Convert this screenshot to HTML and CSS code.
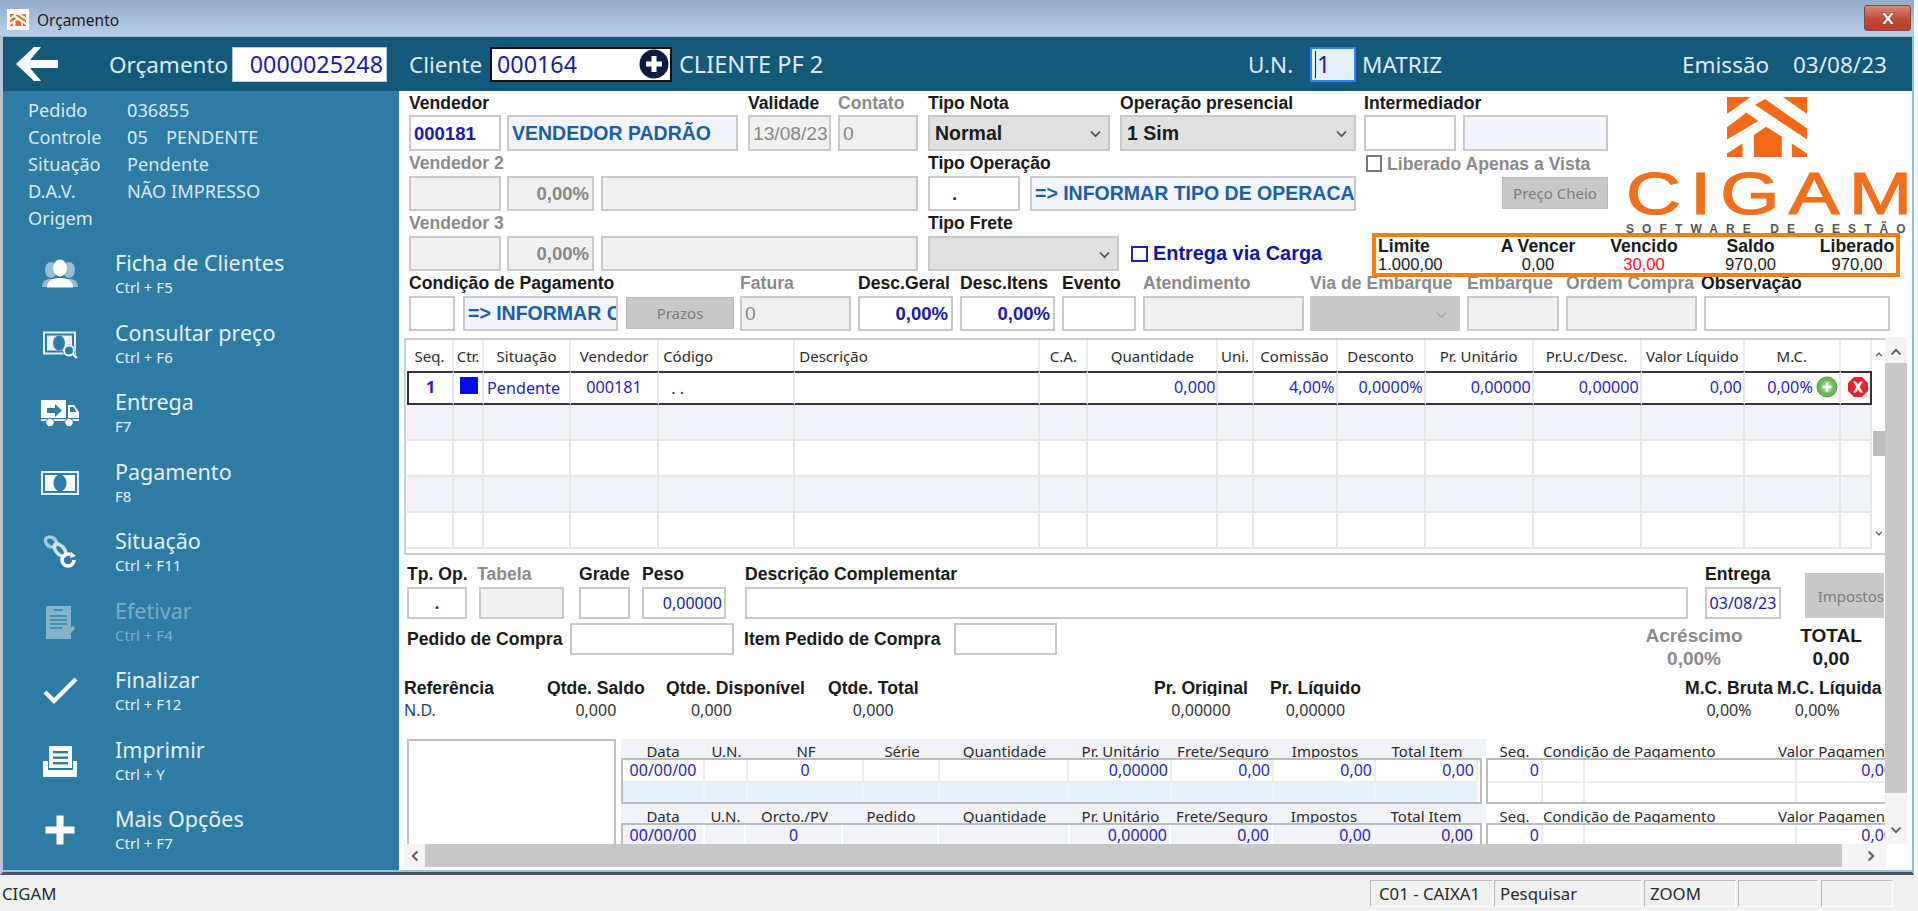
FILE: index.html
```html
<!DOCTYPE html>
<html lang="pt-BR">
<head>
<meta charset="utf-8">
<title>Orçamento</title>
<link rel="stylesheet" href="styles.css">
</head>
<body>
<svg class="sprite" xmlns="http://www.w3.org/2000/svg">
  <symbol id="chev" viewBox="0 0 12 8"><polyline points="1.5,1.5 6,6.2 10.5,1.5" fill="none" stroke="currentColor" stroke-width="1.8"/></symbol>
  <symbol id="house" viewBox="322 22 238 178">
    <polygon points="322,22 392,22 322,72"/>
    <polygon points="488,22 560,22 560,72"/>
    <polygon points="435,28 560,115 560,148 405,45"/>
    <polygon points="380,68 415,93 322,148 322,112"/>
    <polygon points="438,110 485,140 485,200 402,200 402,135"/>
    <polygon points="368,160 368,200 322,200 322,190"/>
    <polygon points="515,160 560,190 560,200 515,200"/>
  </symbol>
</svg>
<div class="win">
  <div class="title">
    <span class="t-ico"><svg class="t-house" aria-hidden="true"><use href="#house"/></svg></span>
    <span class="t-text">Orçamento</span>
    <span class="close"><svg viewBox="0 0 16 14" class="close-x"><path d="M2 1.5 L5.5 1.5 L8 5 L10.5 1.5 L14 1.5 L10 7 L14 12.5 L10.5 12.5 L8 9 L5.5 12.5 L2 12.5 L6 7 Z" fill="#fff" stroke="#6b2a22" stroke-width=".7"/></svg></span>
  </div>
  <div class="hdr">
    <span class="back"><svg viewBox="0 0 42 34" class="back-ico"><path d="M18 0 L25 0 L14 13 L42 13 L42 21 L14 21 L25 34 L18 34 L0 17 Z" fill="#fff"/></svg></span>
    <span class="hl hw-orc">Orçamento</span>
    <span class="hbox hb-orc">0000025248</span>
    <span class="hl hw-cli">Cliente</span>
    <span class="hbox hb-cli">000164<svg viewBox="0 0 30 30" class="plus"><circle cx="15" cy="15" r="14.5" fill="#101a40"/><rect x="7" y="12.5" width="16" height="5" fill="#fff"/><rect x="12.5" y="7" width="5" height="16" fill="#fff"/></svg></span>
    <span class="hl hw-name">CLIENTE PF 2</span>
    <span class="hl hw-un">U.N.</span>
    <span class="hbox hb-un"><i class="caret"></i>1</span>
    <span class="hl hw-mat">MATRIZ</span>
    <span class="hl hw-emi">Emissão</span>
    <span class="hl">03/08/23</span>
  </div>
  <div class="content">
    <aside class="side">
      <div class="info">
        <div class="irow"><span class="ik">Pedido</span><span>036855</span></div>
        <div class="irow"><span class="ik">Controle</span><span class="ctl">05</span><span>PENDENTE</span></div>
        <div class="irow"><span class="ik">Situação</span><span>Pendente</span></div>
        <div class="irow"><span class="ik">D.A.V.</span><span>NÃO IMPRESSO</span></div>
        <div class="irow"><span class="ik">Origem</span></div>
      </div>
      <div class="mi">
        <svg class="mic" viewBox="0 0 40 40"><g fill="#fff" opacity=".5"><ellipse cx="11" cy="16" rx="6" ry="8"/><path d="M2 33 C2 27 6 25 11 25 S20 27 20 33Z"/><ellipse cx="29" cy="16" rx="6" ry="8"/><path d="M20 33 C20 27 24 25 29 25 S38 27 38 33Z"/></g><g fill="#fff"><ellipse cx="20" cy="14" rx="7" ry="8.5"/><path d="M7 33.5 C7 26 13 24 20 24 S33 26 33 33.5Z"/></g></svg>
        <div><div class="mt">Ficha de Clientes</div><div class="ms">Ctrl + F5</div></div>
      </div>
      <div class="mi">
        <svg class="mic" viewBox="0 0 40 40"><rect x="4" y="8.5" width="31" height="21" fill="none" stroke="#e8f0f5" stroke-width="2"/><rect x="7" y="11.5" width="25" height="15" fill="#e8f0f5"/><ellipse cx="19" cy="19" rx="6" ry="7.5" fill="#2e7ba3"/><circle cx="29" cy="27" r="6.5" fill="#2e7ba3"/><circle cx="29" cy="26.5" r="5" fill="none" stroke="#fff" stroke-width="1.8"/><line x1="32.5" y1="30" x2="37" y2="34" stroke="#fff" stroke-width="2.2"/></svg>
        <div><div class="mt">Consultar preço</div><div class="ms">Ctrl + F6</div></div>
      </div>
      <div class="mi">
        <svg class="mic" viewBox="0 0 40 40"><path d="M1 7 H26 V28 H1Z" fill="#fff"/><path d="M28 12 H34 L39 19 V28 H28Z" fill="#fff"/><path d="M30 14 H33.5 L36.5 19 H30Z" fill="#2e7ba3"/><path d="M7 15 H15 V11 L22 17.5 L15 24 V20 H7Z" fill="#2e7ba3"/><rect x="1" y="25" width="38" height="1.2" fill="#2e7ba3"/><circle cx="10" cy="29.5" r="4.2" fill="#fff" stroke="#2e7ba3"/><circle cx="29" cy="29.5" r="4.2" fill="#fff" stroke="#2e7ba3"/></svg>
        <div><div class="mt">Entrega</div><div class="ms">F7</div></div>
      </div>
      <div class="mi">
        <svg class="mic" viewBox="0 0 40 40"><rect x="2" y="9" width="36" height="22" fill="none" stroke="#e8f0f5" stroke-width="2"/><rect x="5" y="12" width="30" height="16" fill="#fff"/><ellipse cx="20" cy="20" rx="6.5" ry="8.5" fill="#2e7ba3"/></svg>
        <div><div class="mt">Pagamento</div><div class="ms">F8</div></div>
      </div>
      <div class="mi">
        <svg class="mic" viewBox="0 0 40 40"><g fill="none" stroke-width="3.6"><ellipse cx="11" cy="10" rx="6" ry="4.5" transform="rotate(35 11 10)" stroke="#a3cbdd"/><ellipse cx="20" cy="18" rx="7.5" ry="4" transform="rotate(48 20 18)" stroke="#cfe2ec"/><circle cx="28" cy="28" r="6" stroke="#fff" stroke-dasharray="30 7.7"/></g><path d="M31 20 L36 24 L30 26Z" fill="#fff"/></svg>
        <div><div class="mt">Situação</div><div class="ms">Ctrl + F11</div></div>
      </div>
      <div class="mi off">
        <svg class="mic" viewBox="0 0 40 40"><rect x="6" y="4" width="25" height="33" fill="#fff"/><g stroke="#2e7ba3" stroke-width="1.4"><line x1="14" y1="8" x2="23" y2="8"/><line x1="10" y1="14" x2="27" y2="14"/><line x1="10" y1="18" x2="27" y2="18"/><line x1="10" y1="22" x2="27" y2="22"/><line x1="10" y1="26" x2="22" y2="26"/></g><polyline points="21,29 26,34 34,25" fill="none" stroke="#fff" stroke-width="3.5"/></svg>
        <div><div class="mt">Efetivar</div><div class="ms">Ctrl + F4</div></div>
      </div>
      <div class="mi">
        <svg class="mic" viewBox="0 0 40 40"><polyline points="5,21 14,30 36,8" fill="none" stroke="#fff" stroke-width="4.2"/></svg>
        <div><div class="mt">Finalizar</div><div class="ms">Ctrl + F12</div></div>
      </div>
      <div class="mi">
        <svg class="mic" viewBox="0 0 40 40"><path d="M9 5 H32 V27 H9Z" fill="#fff"/><g fill="#2e7ba3"><rect x="13" y="10" width="15" height="2.4"/><rect x="13" y="15.5" width="15" height="2.4"/><rect x="13" y="21" width="15" height="2.4"/></g><path d="M3 20 H8 V29 H33 V20 H37 V36 H3Z" fill="#fff"/></svg>
        <div><div class="mt">Imprimir</div><div class="ms">Ctrl + Y</div></div>
      </div>
      <div class="mi">
        <svg class="mic" viewBox="0 0 40 40"><path d="M16.5 5.5 H23.5 V16.5 H34.5 V23.5 H23.5 V34.5 H16.5 V23.5 H5.5 V16.5 H16.5Z" fill="#fff"/></svg>
        <div><div class="mt">Mais Opções</div><div class="ms">Ctrl + F7</div></div>
      </div>
    </aside>
    <main class="main">
      <section class="top">
        <div class="fr first">
          <div class="f w92 g6"><div class="lb">Vendedor</div><div class="in blu b">000181</div></div>
          <div class="f w231 g10"><div class="lb">&nbsp;</div><div class="in tint big">VENDEDOR PADRÃO</div></div>
          <div class="f w83 g7"><div class="lb">Validade</div><div class="in dis reg">13/08/23</div></div>
          <div class="f w80 g10"><div class="lb mute">Contato</div><div class="in dis reg">0</div></div>
          <div class="f w182 g10"><div class="lb">Tipo Nota</div><div class="in sel b">Normal<svg class="chev"><use href="#chev"/></svg></div></div>
          <div class="f w236 g8"><div class="lb">Operação presencial</div><div class="in sel b">1 Sim<svg class="chev"><use href="#chev"/></svg></div></div>
          <div class="f w92 g7"><div class="lb">Intermediador</div><div class="in"></div></div>
          <div class="f w145"><div class="lb">&nbsp;</div><div class="in tint"></div></div>
        </div>
        <div class="fr">
          <div class="f w92 g6"><div class="lb mute">Vendedor 2</div><div class="in dis"></div></div>
          <div class="f w87 g7"><div class="lb">&nbsp;</div><div class="in dis num b">0,00%</div></div>
          <div class="f w317 g10"><div class="lb">&nbsp;</div><div class="in dis"></div></div>
          <div class="f w92 g10"><div class="lb">Tipo Operação</div><div class="in blu ctr b dot-op">.</div></div>
          <div class="f w326 g8"><div class="lb">&nbsp;</div><div class="in tint mid">=&gt; INFORMAR TIPO DE OPERACAO</div></div>
          <div class="f w244">
            <div class="lb mute chk"><i class="box"></i>Liberado Apenas a Vista</div>
            <div class="btn btn-preco">Preço Cheio</div>
          </div>
        </div>
        <div class="fr">
          <div class="f w92 g6"><div class="lb mute">Vendedor 3</div><div class="in dis"></div></div>
          <div class="f w87 g7"><div class="lb">&nbsp;</div><div class="in dis num b">0,00%</div></div>
          <div class="f w317 g10"><div class="lb">&nbsp;</div><div class="in dis"></div></div>
          <div class="f w191 g12"><div class="lb">Tipo Frete</div><div class="in sel"><svg class="chev"><use href="#chev"/></svg></div></div>
          <div class="carga"><i class="box box-blue"></i>Entrega via Carga</div>
        </div>
        <div class="fr">
          <div class="f w46 g8"><div class="lb">Condição de Pagamento</div><div class="in"></div></div>
          <div class="f w155 g8"><div class="lb">&nbsp;</div><div class="in tint mid">=&gt; INFORMAR CONDIÇÃO</div></div>
          <div class="f w108 g6"><div class="lb">&nbsp;</div><div class="btn btn-prazos">Prazos</div></div>
          <div class="f w111 g7"><div class="lb mute">Fatura</div><div class="in dis reg">0</div></div>
          <div class="f w95 g7"><div class="lb">Desc.Geral</div><div class="in blu num b">0,00%</div></div>
          <div class="f w95 g7"><div class="lb">Desc.Itens</div><div class="in blu num b">0,00%</div></div>
          <div class="f w74 g7"><div class="lb">Evento</div><div class="in"></div></div>
          <div class="f w161 g6"><div class="lb mute">Atendimento</div><div class="in dis"></div></div>
          <div class="f w150 g7"><div class="lb mute">Via de Embarque</div><div class="in sel sel-dark"><svg class="chev chev-l"><use href="#chev"/></svg></div></div>
          <div class="f w92 g7"><div class="lb mute">Embarque</div><div class="in dis"></div></div>
          <div class="f w131 g7"><div class="lb mute">Ordem Compra</div><div class="in dis"></div></div>
          <div class="f w186"><div class="lb lb-obs">Observação</div><div class="in"></div></div>
        </div>
        <div class="logo">
          <svg class="logo-house" aria-hidden="true"><use href="#house"/></svg>
          <div class="logo-word">CIGAM</div>
          <div class="logo-sub">SOFTWARE DE GESTÃO</div>
        </div>
        <div class="credit">
          <div class="cc cc-first"><b>Limite</b><span>1.000,00</span></div>
          <div class="cc"><b>A Vencer</b><span>0,00</span></div>
          <div class="cc"><b>Vencido</b><span class="red">30,00</span></div>
          <div class="cc"><b>Saldo</b><span>970,00</span></div>
          <div class="cc"><b>Liberado</b><span>970,00</span></div>
        </div>
      </section>
      <div class="mid-area">
        <div class="lc">
          <div class="gridwrap">
            <table class="items">
              <colgroup><col class="c47"><col class="c30"><col class="c87"><col class="c88"><col class="c136"><col class="c245"><col class="c48"><col class="c130"><col class="c35"><col class="c84"><col class="c88"><col class="c108"><col class="c108"><col class="c103"><col class="c96"><col class="c31"></colgroup>
              <thead><tr><th>Seq.</th><th>Ctr.</th><th>Situação</th><th>Vendedor</th><th class="tl">Código</th><th class="tl">Descrição</th><th>C.A.</th><th>Quantidade</th><th>Uni.</th><th>Comissão</th><th>Desconto</th><th>Pr. Unitário</th><th>Pr.U.c/Desc.</th><th>Valor Líquido</th><th>M.C.</th><th></th></tr></thead>
              <tbody>
                <tr class="sel-row"><td class="ctr b">1</td><td><i class="sq"></i></td><td class="tl pl3 low">Pendente</td><td class="ctr">000181</td><td class="tl pl12 low">. .</td><td></td><td></td><td class="tr">0,000</td><td></td><td class="tr">4,00%</td><td class="tr">0,0000%</td><td class="tr">0,00000</td><td class="tr">0,00000</td><td class="tr">0,00</td>
                  <td class="tr"><span class="mc">0,00%<svg viewBox="0 0 22 22" class="ico22"><circle cx="11" cy="11" r="10" fill="#6fb560" stroke="#4f9a48"/><circle cx="11" cy="11" r="6" fill="#8ccb7c"/><path d="M9.5 6.5h3v3h3v3h-3v3h-3v-3h-3v-3h3z" fill="#fff"/></svg></span></td>
                  <td><svg viewBox="0 0 22 22" class="ico22 ico-x"><polygon points="7,1 15,1 21,7 21,15 15,21 7,21 1,15 1,7" fill="#e8212b"/><path d="M6 5.5h3l2 3 2-3h3l-3.4 5.5 3.4 5.5h-3l-2-3-2 3h-3l3.4-5.5z" fill="#fff"/></svg></td></tr>
                <tr class="alt"><td></td><td></td><td></td><td></td><td></td><td></td><td></td><td></td><td></td><td></td><td></td><td></td><td></td><td></td><td></td><td></td></tr>
                <tr><td></td><td></td><td></td><td></td><td></td><td></td><td></td><td></td><td></td><td></td><td></td><td></td><td></td><td></td><td></td><td></td></tr>
                <tr class="alt"><td></td><td></td><td></td><td></td><td></td><td></td><td></td><td></td><td></td><td></td><td></td><td></td><td></td><td></td><td></td><td></td></tr>
                <tr><td></td><td></td><td></td><td></td><td></td><td></td><td></td><td></td><td></td><td></td><td></td><td></td><td></td><td></td><td></td><td></td></tr>
              </tbody>
            </table>
            <div class="vs-in">
              <svg class="chev-in up"><use href="#chev"/></svg>
              <div class="thumb"></div>
              <svg class="chev-in"><use href="#chev"/></svg>
            </div>
          </div>
          <div class="brow-a">
            <div class="f w60 g12"><div class="lb">Tp. Op.</div><div class="in2 blu ctr b dot-tp">.</div></div>
            <div class="f w85 g15"><div class="lb mute lb-tab">Tabela</div><div class="in2 dis"></div></div>
            <div class="f w51 g12"><div class="lb">Grade</div><div class="in2"></div></div>
            <div class="f w84 g19"><div class="lb">Peso</div><div class="in2 blu num">0,00000</div></div>
            <div class="f w943 g17"><div class="lb">Descrição Complementar</div><div class="in2"></div></div>
            <div class="f w76 g24"><div class="lb">Entrega</div><div class="in2 blu ctr">03/08/23</div></div>
            <div class="btn btn-imp">Impostos</div>
          </div>
          <div class="brow-b">
            <div class="lb lb-ped">Pedido de Compra</div>
            <div class="in2 w164"></div>
            <div class="lb lb-item">Item Pedido de Compra</div>
            <div class="in2 w103"></div>
            <div class="tot tot-a"><b>Acréscimo</b><b>0,00%</b></div>
            <div class="tot tot-t"><b>TOTAL</b><b>0,00</b></div>
          </div>
          <div class="brow-c">
            <div class="st st-l"><b>Referência</b><span>N.D.</span></div>
            <div class="st"><b>Qtde. Saldo</b><span>0,000</span></div>
            <div class="st"><b>Qtde. Disponível</b><span class="off48">0,000</span></div>
            <div class="st"><b>Qtde. Total</b><span>0,000</span></div>
            <div class="st"><b>Pr. Original</b><span>0,00000</span></div>
            <div class="st"><b>Pr. Líquido</b><span>0,00000</span></div>
            <div class="st"><b>M.C. Bruta</b><span>0,00%</span></div>
            <div class="st"><b>M.C. Líquida</b><span class="off24">0,00%</span></div>
          </div>
          <div class="brow-d">
            <div class="imgbox"></div>
            <div class="minis">
              <div class="mhead">
                <div class="mgrid g-a"><span>Data</span><span>U.N.</span><span>NF</span><span>Série</span><span>Quantidade</span><span>Pr. Unitário</span><span>Frete/Seguro</span><span>Impostos</span><span>Total Item</span></div>
                <div class="mgrid g-r"><span>Seq.</span><span class="tl">Condição de Pagamento</span><span class="tl">Valor Pagamento</span></div>
              </div>
              <div class="mbody">
                <div class="mtab">
                  <div class="mrow g-a"><span>00/00/00</span><span></span><span>0</span><span></span><span></span><span class="tr">0,00000</span><span class="tr">0,00</span><span class="tr">0,00</span><span class="tr">0,00</span></div>
                  <div class="mrow g-a blue"><span></span><span></span><span></span><span></span><span></span><span></span><span></span><span></span><span></span></div>
                </div>
                <div class="mtab mtab-r">
                  <div class="mrow g-v"><span class="tr">0</span><span></span><span></span><span class="tr">0,00</span></div>
                  <div class="mrow g-v"><span></span><span></span><span></span><span></span></div>
                </div>
              </div>
              <div class="mhead mhead2">
                <div class="mgrid g-b"><span>Data</span><span>U.N.</span><span>Orcto./PV</span><span>Pedido</span><span>Quantidade</span><span>Pr. Unitário</span><span>Frete/Seguro</span><span>Impostos</span><span>Total Item</span></div>
                <div class="mgrid g-r"><span>Seq.</span><span class="tl">Condição de Pagamento</span><span class="tl">Valor Pagamento</span></div>
              </div>
              <div class="mbody">
                <div class="mtab">
                  <div class="mrow g-b tint2"><span>00/00/00</span><span></span><span>0</span><span></span><span></span><span class="tr">0,00000</span><span class="tr">0,00</span><span class="tr">0,00</span><span class="tr">0,00</span></div>
                </div>
                <div class="mtab mtab-r">
                  <div class="mrow g-v"><span class="tr">0</span><span></span><span></span><span class="tr">0,00</span></div>
                </div>
              </div>
            </div>
          </div>
        </div>
        <div class="vs-out">
          <svg class="chev-out up"><use href="#chev"/></svg>
          <div class="vs-track"></div>
          <svg class="chev-out"><use href="#chev"/></svg>
        </div>
      </div>
      <div class="hs">
        <span class="hs-l"><svg class="chev-h left"><use href="#chev"/></svg></span>
        <div class="hs-track"></div>
        <span class="hs-r"><svg class="chev-h right"><use href="#chev"/></svg></span>
      </div>
    </main>
  </div>
</div>
<footer class="status">
  <span class="st-name">CIGAM</span>
  <span class="pn pn1">C01 - CAIXA1</span>
  <span class="pn pn2">Pesquisar</span>
  <span class="pn pn3">ZOOM</span>
  <span class="pn pn4"></span>
  <span class="pn pn5"></span>
</footer>
</body>
</html>
```

FILE: styles.css
```css
* { box-sizing: border-box; }
html, body { margin: 0; padding: 0; height: 911px; overflow: hidden; background: #fff; }
body { font-family: "Noto Sans", sans-serif; color: #222; font-size: 15px; }
i { font-style: normal; display: inline-block; }
.sprite { display: none; }

.win { width: 1914px; height: 875px; border-left: 3px solid #b4c6d6; border-right: 2px solid #8cc4e4; border-bottom: 3px solid #4a5560; position: relative; }
.title { height: 37px; margin-left: -3px; margin-right: -2px; padding-top: 3px; background: linear-gradient(#93abc9, #b8d1ea); display: flex; align-items: center; border-bottom: 1px solid #9ab3c8; }
.t-ico { width: 22px; height: 21px; margin-left: 7px; background: #fff; display: flex; align-items: center; justify-content: center; }
.t-house { width: 16px; height: 16px; fill: #f0641c; }
.t-text { margin-left: 8px; font-size: 15.5px; color: #1c1c1c; }
.close { margin-left: auto; margin-right: 3px; width: 47px; height: 26px; margin-top: -3px; border: 1px solid #7a4a44; border-radius: 3px; background: linear-gradient(#d88a7c, #c0493a 55%, #b83c2e); display: flex; align-items: center; justify-content: center; }
.close-x { width: 18px; height: 15px; }

.hdr { height: 54px; background: #14587a; color: #dfeaf1; display: flex; align-items: center; font-size: 22.5px; white-space: nowrap; }
.back { width: 106px; padding-left: 13px; display: flex; }
.back-ico { width: 42px; height: 34px; }
.hl { line-height: 35px; }
.hw-orc { width: 123px; }
.hw-cli { width: 81px; margin-left: 22px; }
.hw-name { width: 569px; margin-left: 7px; font-size: 23.5px; }
.hw-un { width: 62px; }
.hw-mat { width: 320px; margin-left: 6px; }
.hw-emi { width: 111px; }
.hbox { height: 35px; background: #fff; color: #1c1aa6; font-size: 23.3px; line-height: 33px; display: flex; align-items: center; }
.hb-orc { width: 155px; justify-content: flex-end; padding-right: 3px; border: 1px solid #b8c8d0; }
.hb-cli { width: 182px; padding-left: 5px; border: 2px solid #111; position: relative; }
.plus { width: 30px; height: 30px; margin-left: auto; margin-right: 1px; }
.hb-un { width: 46px; background: #e4f0fd; border: 2px solid #2e86e6; padding-left: 3px; }
.caret { width: 1px; height: 27px; background: #222; margin-right: 1px; }

.content { display: flex; height: 781px; border-bottom: 2px solid #8cc8e8; }
.side { width: 396px; flex: none; background: #2e7ba3; color: #e6eff4; }
.info { height: 159px; padding: 5.5px 0 0 25px; font-size: 18.2px; color: #dbe8ef; }
.irow { display: flex; height: 27.2px; line-height: 27px; white-space: nowrap; }
.ik { width: 99px; }
.ctl { width: 39px; }
.mi { height: 69.5px; display: flex; padding-left: 37px; }
.mic { width: 40px; height: 40px; margin-top: 4px; margin-right: 35px; flex: none; }
.mt { font-size: 21.5px; line-height: 26px; white-space: nowrap; }
.ms { font-size: 15px; line-height: 20px; margin-top: 1px; white-space: nowrap; }
.off { opacity: .42; }

.main { width: 1513px; flex: none; background: #fff; }
.top { height: 246px; position: relative; padding-left: 10px; font-family: "Liberation Sans", sans-serif; }
.fr { display: flex; height: 60px; }
.f { display: flex; flex-direction: column; flex: none; }
.lb { height: 25px; line-height: 24px; font-size: 17.6px; font-weight: 700; color: #1a1a1a; white-space: nowrap; font-family: "Liberation Sans", sans-serif; }
.mute { color: #8a8a8a; }
.first .lb { height: 24px; }
.in { height: 35px; border: 2px solid #c8c8c8; background: #fff; font-size: 18.5px; line-height: 31px; padding: 0 3px; white-space: nowrap; overflow: hidden; display: flex; align-items: center; font-family: "Liberation Sans", sans-serif; }
.first .in { height: 36px; }
.b { font-weight: 700; }
.blu { color: #2018a8; }
.ctr { justify-content: center; text-align: center; }
.num { justify-content: flex-end; text-align: right; }
.dot-op { padding-right: 42px; }
.dot-tp { padding-right: 20px; }
.dis { background: #f0f0f0; color: #888; }
.reg { font-size: 19.2px; padding: 0 3px; }
.tint { background: #f1f4fb; color: #1a5ea6; font-weight: 700; }
.big { font-size: 19.5px; }
.mid { font-size: 19.5px; padding: 0 3px; }
.sel { background: #e0e0e0; color: #1c1c1c; font-size: 19.5px; position: relative; padding-left: 5px; }
.sel-dark { background: #c8c8c8; }
.chev { width: 13px; height: 8px; color: #555; position: absolute; right: 6px; top: 13px; }
.chev-l { color: #aaa; right: 10px; }
.chk { display: flex; align-items: center; }
.box { width: 16px; height: 17px; border: 2px solid #777; background: #fff; margin-right: 5px; margin-left: 2px; }
.btn { background: #c8c8c8; color: #7c7c7c; font-family: "Noto Sans", sans-serif; font-size: 15px; display: flex; align-items: center; justify-content: center; white-space: nowrap; border: 1px solid #bbb; }
.btn-preco { width: 106px; height: 32px; margin-left: auto; margin-top: 1px; }
.btn-prazos { width: 108px; height: 32px; margin-top: 1px; }
.btn-imp { width: 79px; height: 45px; margin-top: 11px; justify-content: flex-end; padding-right: 0; flex: none; border: 0; }
.carga { height: 35px; margin-top: 25px; display: flex; align-items: center; color: #1414a8; font-size: 19.9px; font-weight: 700; white-space: nowrap; }
.box-blue { border-color: #2020c0; margin: 0 5px 0 0; width: 17px; height: 16px; }
.lb-obs { margin-left: -3px; }

.g6 { margin-right: 6px; } .g7 { margin-right: 7px; } .g8 { margin-right: 8px; } .g10 { margin-right: 10px; }
.g12 { margin-right: 12px; } .g15 { margin-right: 15px; } .g17 { margin-right: 17px; } .g19 { margin-right: 19px; } .g24 { margin-right: 24px; }
.w46 { width: 46px; } .w51 { width: 51px; } .w60 { width: 60px; } .w74 { width: 74px; } .w76 { width: 76px; } .w80 { width: 80px; }
.w83 { width: 83px; } .w84 { width: 84px; } .w85 { width: 85px; } .w87 { width: 87px; } .w92 { width: 92px; } .w95 { width: 95px; }
.w103 { width: 103px; } .w108 { width: 108px; } .w111 { width: 111px; } .w131 { width: 131px; } .w145 { width: 145px; } .w150 { width: 150px; }
.w155 { width: 155px; } .w161 { width: 161px; } .w164 { width: 164px; } .w182 { width: 182px; } .w186 { width: 186px; } .w191 { width: 191px; }
.w231 { width: 231px; } .w236 { width: 236px; } .w244 { width: 244px; } .w317 { width: 317px; } .w326 { width: 326px; } .w943 { width: 943px; }

.logo { position: absolute; left: 1227px; top: 6px; width: 284px; height: 137px; overflow: hidden; }
.logo-house { display: block; width: 80px; height: 60px; margin-left: 101px; fill: #f4691a; }
.logo-word { font-family: "Liberation Sans", sans-serif; font-size: 58.6px; line-height: 42px; height: 42px; margin-top: 16px; color: #f0701e; letter-spacing: 7px; transform: scaleX(1.3); transform-origin: left center; -webkit-text-stroke: 1.2px #f0701e; white-space: nowrap; }
.logo-sub { font-family: "Liberation Sans", sans-serif; font-size: 12px; font-weight: 700; line-height: 14px; margin-top: 7px; color: #555; letter-spacing: 8.1px; white-space: nowrap; }
.credit { position: absolute; left: 973px; top: 142px; width: 528px; height: 44px; border: 4px solid #f57f0a; background: #fff; display: grid; grid-template-columns: 107px 106px 106px 107px 106px; padding-left: 2px; }
.cc { display: flex; flex-direction: column; text-align: center; white-space: nowrap; }
.cc b { font-size: 17.6px; line-height: 19px; color: #1a1a1a; }
.cc span { font-size: 16.6px; line-height: 18px; color: #1a1a1a; }
.cc-first { text-align: left; }
.red { color: #f0142e !important; }

.mid-area { display: flex; height: 507px; }
.lc { width: 1487px; height: 507px; overflow: hidden; flex: none; }
.gridwrap { margin: 1px 0 0 5px; width: 1481px; height: 217px; border-top: 2px solid #ccc; border-bottom: 2px solid #ccc; border-left: 2px solid #ccc; padding-left: 1px; display: flex; }
.items { width: 1465px; border-collapse: separate; border-spacing: 0; table-layout: fixed; font-size: 16.2px; flex: none; height: 209px; }
.c47 { width: 47px; } .c30 { width: 30px; } .c87 { width: 87px; } .c88 { width: 88px; } .c136 { width: 136px; } .c245 { width: 245px; }
.c48 { width: 48px; } .c130 { width: 130px; } .c35 { width: 35px; } .c84 { width: 84px; } .c108 { width: 108px; } .c103 { width: 103px; } .c96 { width: 96px; } .c31 { width: 31px; }
.items th { height: 31px; font-size: 15px; font-weight: 400; color: #2a2a2a; padding: 0; border-right: 2px solid #ececec; text-align: center; white-space: nowrap; overflow: hidden; }
.items td { padding: 0; border-right: 2px solid #e6e6e6; border-bottom: 2px solid #e6e6e6; height: 36px; color: #2a1fb0; white-space: nowrap; }
.items th.tl, .items td.tl { text-align: left; }
.items th.tl { padding-left: 4px; }
.items td.tr { text-align: right; padding-right: 1px; }
.items td.ctr { text-align: center; }
.sel-row td { height: 34px; padding-bottom: 3px; border-top: 2px solid #333; border-bottom: 2px solid #333; }
.sel-row td:first-child { border-left: 2px solid #333; }
.sel-row td:last-child { border-right: 2px solid #333; }
.sq { width: 18px; height: 17px; background: #0a0af0; display: block; margin: -3px 0 0 6px; }
.pl3 { padding-left: 3px !important; }
.pl12 { padding-left: 12px !important; }
.low { padding-top: 2px !important; }
.alt td { background: #f1f3f8; }
.mc { display: flex; justify-content: flex-end; align-items: center; margin-top: 1px; }
.ico22 { width: 22px; height: 22px; margin-left: 3px; flex: none; display: block; }
.ico-x { margin-left: 6px; margin-top: 1px; }
.vs-in { width: 12px; margin-left: 1px; height: 213px; position: relative; display: flex; flex-direction: column; align-items: center; }
.chev-in { width: 8px; height: 5px; color: #444; display: block; margin-top: 12px; flex: none; }
.chev-in.up { transform: rotate(180deg); margin-top: 12px; }
.thumb { width: 12px; height: 25px; background: #bdbdbd; margin-top: 74px; margin-bottom: 63px; flex: none; }

.brow-a { display: flex; padding-left: 8px; margin-top: 7px; height: 57px; }
.brow-a .lb { height: 25px; }
.in2 { height: 32px; border: 2px solid #c8c8c8; background: #fff; font-size: 16px; padding: 0 2px; display: flex; align-items: center; white-space: nowrap; flex: none; }
.in2.dis { background: #f0f0f0; }
.brow-b { display: flex; padding-left: 8px; margin-top: 4px; height: 54px; position: relative; }
.lb-tab { margin-left: -2px; }
.lb-ped { width: 163px; height: 32px; line-height: 32px; flex: none; }
.lb-item { width: 210px; height: 32px; line-height: 32px; margin-left: 10px; flex: none; }
.brow-b .in2 { border-width: 2px; }
.brow-b .w164 { height: 32px; }
.tot { position: absolute; top: 1px; display: flex; flex-direction: column; align-items: center; font-family: "Liberation Sans", sans-serif; font-size: 19px; line-height: 23px; }
.tot-a { left: 1245px; width: 100px; color: #8a8a8a; }
.tot-t { left: 1402px; width: 60px; color: #1a1a1a; }

.brow-c { display: grid; grid-template-columns: 143px 119px 162px 326px 116px 415px 92px auto; padding-left: 5px; height: 62px; }
.st { justify-self: start; display: flex; flex-direction: column; text-align: center; white-space: nowrap; }
.st b { font-family: "Liberation Sans", sans-serif; font-size: 17.6px; line-height: 22px; height: 19px; overflow: hidden; color: #1a1a1a; }
.st span { font-size: 16px; line-height: 22px; margin-top: 3px; color: #333; }
.st-l { text-align: left; }
.st-l span { color: #1f3f66; }
.off48 { padding-right: 48px; }
.off24 { padding-right: 24px; }

.brow-d { display: flex; padding-left: 8px; height: 110px; }
.imgbox { width: 209px; height: 110px; border: 2px solid #c0c0c0; border-bottom: 0; background: #fff; flex: none; }
.minis { margin-left: 5px; width: 1265px; flex: none; overflow: hidden; height: 105px; }
.mhead { display: flex; height: 19px; background: #f1f3f8; font-size: 15px; overflow: hidden; }
.mhead2 { background: #f1f3f8; }
.mgrid { display: grid; line-height: 24px; color: #2a2a2a; white-space: nowrap; }
.mgrid span { text-align: center; overflow: hidden; }
.mgrid span.tl { text-align: left; }
.g-a { grid-template-columns: 84px 43px 116px 76px 129px 103px 102px 102px 102px; }
.g-b { grid-template-columns: 84px 41px 97px 96px 131px 101px 102px 102px 102px; }
.mhead > .g-a, .mhead > .g-b { width: 865px; }
.g-r { grid-template-columns: 57px 235px 108px; width: 400px; background: #fff; overflow: hidden; }
.mbody { display: flex; color: #2a1fb0; font-size: 16px; }
.mtab { width: 861px; height: 46px; border: 2px solid #bcbcbc; margin-right: 4px; flex: none; overflow: hidden; }
.mtab-r { width: 400px; margin-right: 0; border-right: 0; }
.mrow { display: grid; height: 22px; line-height: 21px; text-align: center; white-space: nowrap; }
.mrow span { border-right: 2px solid #ececec; border-bottom: 2px solid #ececec; overflow: visible; }
.mrow span.tr { text-align: right; padding-right: 2px; }
.mrow.blue span { background: #e4f0fc; border-bottom: 0; border-right-color: #f0f4f8; }
.tint2 span { background: #f1f3f8; border-right-color: #fff; }
.g-v { grid-template-columns: 55px 42px 212px 100px; }
.g-a.mrow { grid-template-columns: 82px 43px 116px 76px 129px 103px 102px 102px 102px; }
.g-b.mrow { grid-template-columns: 82px 41px 97px 96px 131px 101px 102px 102px 102px; }

.vs-out { width: 22px; flex: none; display: flex; flex-direction: column; align-items: center; background: #f4f4f4; height: 507px; margin-left: -1px; }
.chev-out { width: 12px; height: 8px; color: #555; flex: none; }
.chev-out.up { transform: rotate(180deg); margin: 11px 0 7px; }
.vs-track { width: 22px; height: 430px; background: #c8c8c8; flex: none; margin-bottom: 33px; }
.hs { display: flex; height: 23px; margin-left: 5px; width: 1482px; background: #f4f4f4; align-items: center; }
.hs-l { width: 21px; display: flex; justify-content: center; }
.hs-track { width: 1417px; height: 23px; background: #c8c8c8; flex: none; }
.hs-r { width: 44px; display: flex; justify-content: center; padding-left: 14px; }
.chev-h { width: 12px; height: 8px; color: #555; }
.chev-h.left { transform: rotate(90deg); }
.chev-h.right { transform: rotate(-90deg); }

.status { height: 36px; background: #f0f0f0; display: flex; align-items: center; font-size: 16.8px; color: #2a2a2a; white-space: nowrap; position: relative; }
.st-name { width: 1370px; padding-left: 2px; }
.pn { height: 27px; border: 1px solid; border-color: #b8b8b8 #fff #fff #b8b8b8; line-height: 25px; padding-left: 5px; flex: none; }
.pn1 { width: 123px; padding-left: 8px; }
.pn2 { width: 148px; margin-left: 1px; }
.pn3 { width: 92px; margin-left: 2px; }
.pn4 { width: 80px; margin-left: 2px; }
.pn5 { width: 72px; margin-left: 3px; }
```
